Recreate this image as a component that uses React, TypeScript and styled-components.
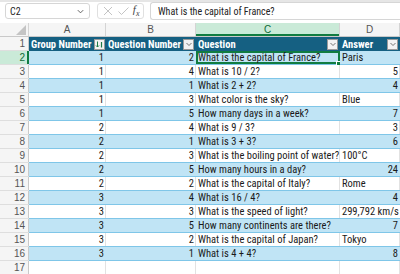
import React from "react";
import styled, { createGlobalStyle } from "styled-components";

type Row = [number, number, string, string];

const rows: Row[] = [
  [1, 2, "What is the capital of France?", "Paris"],
  [1, 4, "What is 10 / 2?", "5"],
  [1, 1, "What is 2 + 2?", "4"],
  [1, 3, "What color is the sky?", "Blue"],
  [1, 5, "How many days in a week?", "7"],
  [2, 4, "What is 9 / 3?", "3"],
  [2, 1, "What is 3 + 3?", "6"],
  [2, 3, "What is the boiling point of water?", "100°C"],
  [2, 5, "How many hours in a day?", "24"],
  [2, 2, "What is the capital of Italy?", "Rome"],
  [3, 4, "What is 16 / 4?", "4"],
  [3, 3, "What is the speed of light?", "299,792 km/s"],
  [3, 5, "How many continents are there?", "7"],
  [3, 2, "What is the capital of Japan?", "Tokyo"],
  [3, 1, "What is 4 + 4?", "8"],
];

const isNumber = (v: string) => /^\d+$/.test(v);

const GlobalStyle = createGlobalStyle`
  html, body {
    margin: 0;
    padding: 0;
    background: #ffffff;
    overflow: hidden;
  }
  body {
    font-family: "Roboto Condensed", Roboto, sans-serif;
    font-stretch: condensed;
    font-size: 10.5px;
    color: #1a1a1a;
  }
`;

const COLS = "29px 77px 90px 144px 1fr";

export default function App() {
  return (
    <>
      <GlobalStyle />
      <Window>
        <FormulaBar>
          <NameBox>
            <span>C2</span>
            <Chevron width="9" height="9" viewBox="0 0 10 10">
              <path d="M2 3.5 L5 6.5 L8 3.5" fill="none" stroke="#555" strokeWidth="1" />
            </Chevron>
          </NameBox>
          <ActionBox>
            <svg width="12" height="12" viewBox="0 0 12 12">
              <path d="M2 2 L10 10 M10 2 L2 10" stroke="#c4c4c4" strokeWidth="1" />
            </svg>
            <svg width="13" height="12" viewBox="0 0 13 12">
              <path d="M1.5 6.5 L4.5 9.5 L11.5 2.5" fill="none" stroke="#c4c4c4" strokeWidth="1" />
            </svg>
            <Fx>
              f<sub>x</sub>
            </Fx>
          </ActionBox>
          <FormulaInput>What is the capital of France?</FormulaInput>
        </FormulaBar>

        <Sheet>
          <ColHeaderRow>
            <Corner>
              <svg width="10" height="10" viewBox="0 0 10 10">
                <path d="M10 0 L10 10 L0 10 Z" fill="#c4c4c4" />
              </svg>
            </Corner>
            <ColHeader>A</ColHeader>
            <ColHeader>B</ColHeader>
            <ColHeader $active>C</ColHeader>
            <ColHeader>D</ColHeader>
          </ColHeaderRow>

          <SheetRow>
            <RowHeader>1</RowHeader>
            <HeadCell>
              <span>Group Number</span>
              <FilterButton>
                <svg width="9" height="9" viewBox="0 0 9 9">
                  <path d="M2.5 1.5 L2.5 7 M1 5.5 L2.5 7 L4 5.5" fill="none" stroke="#1e7b46" strokeWidth="1" />
                  <path d="M6.5 2 L6.5 7.5" stroke="#1e7b46" strokeWidth="1.2" />
                </svg>
              </FilterButton>
            </HeadCell>
            <HeadCell>
              <span>Question Number</span>
              <FilterButton>
                <DropArrow />
              </FilterButton>
            </HeadCell>
            <HeadCell>
              <span>Question</span>
              <FilterButton>
                <DropArrow />
              </FilterButton>
            </HeadCell>
            <HeadCell>
              <span>Answer</span>
              <FilterButton>
                <DropArrow />
              </FilterButton>
            </HeadCell>
          </SheetRow>

          {rows.map((r, i) => {
            const banded = i % 2 === 0;
            const active = i === 0;
            return (
              <SheetRow key={i}>
                <RowHeader $active={active}>{i + 2}</RowHeader>
                <Cell $banded={banded} $right>
                  {r[0]}
                </Cell>
                <Cell $banded={banded} $right>
                  {r[1]}
                </Cell>
                <Cell $banded={banded} $selected={active}>
                  {r[2]}
                  {active && <FillHandle />}
                </Cell>
                <Cell $banded={banded} $right={isNumber(r[3])}>
                  {r[3]}
                </Cell>
              </SheetRow>
            );
          })}

          <SheetRow>
            <RowHeader>17</RowHeader>
            <EmptyCell />
            <EmptyCell />
            <EmptyCell />
            <EmptyCell />
          </SheetRow>
        </Sheet>
      </Window>
    </>
  );
}

function DropArrow() {
  return (
    <svg width="8" height="8" viewBox="0 0 8 8">
      <path d="M1.5 3 L4 5.5 L6.5 3" fill="none" stroke="#666" strokeWidth="0.9" />
    </svg>
  );
}

const Window = styled.div`
  width: 400px;
  height: 274px;
  overflow: hidden;
  display: flex;
  flex-direction: column;
  background: #ffffff;
`;

const FormulaBar = styled.div`
  display: flex;
  align-items: center;
  gap: 6px;
  height: 28px;
  padding: 0 0 0 5px;
  border-top: 2px solid #e6e6e6;
  box-sizing: border-box;
  font-size: 10px;
  color: #222;
`;

const NameBox = styled.div`
  width: 85px;
  height: 16px;
  box-sizing: border-box;
  border: 1px solid #d6d6d6;
  border-radius: 3px;
  display: flex;
  align-items: center;
  justify-content: space-between;
  padding: 0 4px 0 4px;
`;

const Chevron = styled.svg`
  flex: none;
`;

const ActionBox = styled.div`
  width: 47px;
  height: 16px;
  box-sizing: border-box;
  border: 1px solid #e0e0e0;
  border-radius: 3px;
  display: flex;
  align-items: center;
  justify-content: space-around;
  padding: 0 2px;
  margin-left: 1px;
`;

const Fx = styled.span`
  font-family: "Liberation Serif", serif;
  font-style: italic;
  font-size: 11px;
  color: #444;
  line-height: 1;

  sub {
    font-size: 8px;
  }
`;

const FormulaInput = styled.div`
  flex: 1;
  height: 18px;
  box-sizing: border-box;
  border: 1px solid #d6d6d6;
  border-right: none;
  border-radius: 3px 0 0 3px;
  display: flex;
  align-items: center;
  padding-left: 7px;
`;

const Sheet = styled.div`
  display: flex;
  flex-direction: column;
  margin-top: 3px;
`;

const ColHeaderRow = styled.div`
  display: grid;
  grid-template-columns: ${COLS};
  height: 13px;
  background: #f5f5f5;
  border-bottom: 1px solid #c9c9c9;
`;

const Corner = styled.div`
  display: flex;
  align-items: flex-end;
  justify-content: flex-end;
  padding: 0 2px 1px 0;
  border-right: 1px solid #d4d4d4;
`;

const ColHeader = styled.div<{ $active?: boolean }>`
  display: flex;
  align-items: center;
  justify-content: center;
  font-family: "Liberation Sans", Arial, sans-serif;
  font-size: 10px;
  color: ${(p) => (p.$active ? "#0e6b35" : "#555")};
  background: ${(p) => (p.$active ? "#caead8" : "transparent")};
  border-right: 1px solid #d4d4d4;
  box-shadow: ${(p) => (p.$active ? "inset 0 -2px 0 #107c41" : "none")};
`;

const SheetRow = styled.div`
  display: grid;
  grid-template-columns: ${COLS};
  height: 14px;
`;

const RowHeader = styled.div<{ $active?: boolean }>`
  display: flex;
  align-items: center;
  justify-content: flex-end;
  padding-right: 4px;
  font-family: "Liberation Sans", Arial, sans-serif;
  font-size: 10px;
  color: ${(p) => (p.$active ? "#0e6b35" : "#555")};
  background: ${(p) => (p.$active ? "#caead8" : "#f5f5f5")};
  border-bottom: 1px solid #dedede;
  box-shadow: ${(p) => (p.$active ? "inset -2px 0 0 #107c41" : "inset -1px 0 0 #c9c9c9")};
`;

const HeadCell = styled.div`
  display: flex;
  align-items: center;
  justify-content: space-between;
  gap: 2px;
  background: #156082;
  color: #ffffff;
  font-weight: bold;
  font-size: 10.5px;
  padding: 0 2px 0 2px;
  white-space: nowrap;
  overflow: hidden;
`;

const FilterButton = styled.span`
  flex: none;
  width: 11px;
  height: 11px;
  box-sizing: border-box;
  background: #f3f3f3;
  border: 1px solid #9a9a9a;
  display: flex;
  align-items: center;
  justify-content: center;
`;

const Cell = styled.div<{ $banded: boolean; $right?: boolean; $selected?: boolean }>`
  position: relative;
  display: flex;
  align-items: center;
  justify-content: ${(p) => (p.$right ? "flex-end" : "flex-start")};
  padding: 0 2px;
  white-space: nowrap;
  background: ${(p) => (p.$banded ? "#c0e4f5" : "#ffffff")};
  border-bottom: 1px solid #7fc6e8;
  box-shadow: ${(p) => (p.$selected ? "inset 0 0 0 2px #107c41" : p.$banded ? "none" : "inset -1px 0 0 #e2e2e2")};
`;

const FillHandle = styled.span`
  position: absolute;
  right: -2px;
  bottom: -3px;
  width: 4px;
  height: 4px;
  background: #107c41;
  border: 1px solid #ffffff;
`;

const EmptyCell = styled.div`
  border-right: 1px solid #e2e2e2;
`;
